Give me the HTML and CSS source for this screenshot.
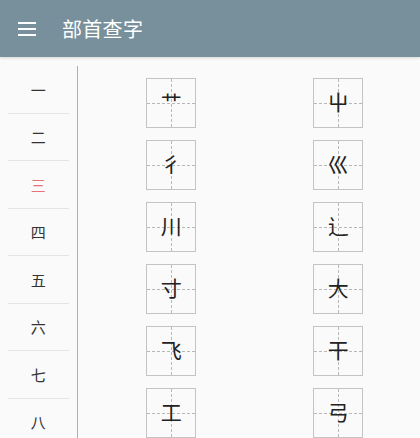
FILE: index.html
```html
<!DOCTYPE html>
<html lang="zh">
<head>
    <meta charset="UTF-8">
    <meta name="viewport" content="width=device-width, initial-scale=1.0">
    <title>部首查字</title>
    <link rel="stylesheet" href="styles.css">
</head>
<body>

<header class="toolbar">
    <svg class="menu-icon" width="18" height="14" viewBox="0 0 18 14">
        <rect x="0" y="0" width="18" height="2" fill="#fff"/>
        <rect x="0" y="6" width="18" height="2" fill="#fff"/>
        <rect x="0" y="12" width="18" height="2" fill="#fff"/>
    </svg>
    <h1 class="title">部首查字</h1>
</header>

<div class="main">
    <ul class="stroke-list">
        <li>一</li>
        <li>二</li>
        <li class="active">三</li>
        <li>四</li>
        <li>五</li>
        <li>六</li>
        <li>七</li>
        <li>八</li>
    </ul>

    <div class="radical-grid">
        <div class="cell"><span>艹</span></div>
        <div class="cell"><span>屮</span></div>
        <div class="cell"><span>彳</span></div>
        <div class="cell"><span>巛</span></div>
        <div class="cell"><span>川</span></div>
        <div class="cell"><span>辶</span></div>
        <div class="cell"><span>寸</span></div>
        <div class="cell"><span>大</span></div>
        <div class="cell"><span>飞</span></div>
        <div class="cell"><span>干</span></div>
        <div class="cell"><span>工</span></div>
        <div class="cell"><span>弓</span></div>
    </div>
</div>

</body>
</html>
```

FILE: styles.css
```css
body {
    font-family: Roboto, "Noto Sans CJK SC", sans-serif;
    background-color: #fafafa;
    margin: 0;
    height: 438px;
    overflow: hidden;
}

.toolbar {
    height: 57px;
    background-color: #78909c;
    display: flex;
    align-items: center;
    padding-left: 18px;
    box-shadow: 0 1px 3px rgba(0,0,0,0.15);
}

.menu-icon {
    display: block;
}

.title {
    margin: 0 0 0 26px;
    color: #fff;
    font-size: 20px;
    font-weight: normal;
    letter-spacing: 0.3px;
}

.main {
    display: flex;
    padding-top: 9px;
    height: 372px;
    overflow: hidden;
}

.stroke-list {
    list-style: none;
    margin: 0;
    padding: 0 8px 0 8px;
    width: 61px;
    border-right: 1px solid #b0b0b0;
    overflow: hidden;
}

.stroke-list li {
    height: 46.5px;
    display: flex;
    align-items: center;
    justify-content: center;
    font-size: 15px;
    color: #333;
    border-bottom: 1px solid #e4e4e4;
}

.stroke-list li.active {
    color: #e57373;
}

.radical-grid {
    display: grid;
    grid-template-columns: 167px 167px;
    row-gap: 12px;
    padding: 12px 0 0 10px;
    justify-items: center;
    align-content: start;
    overflow: hidden;
}

.cell {
    box-sizing: border-box;
    width: 50px;
    height: 50px;
    border: 1px solid #c4c4c4;
    position: relative;
    display: flex;
    align-items: center;
    justify-content: center;
    background-color: #fafafa;
}

.cell::before {
    content: "";
    position: absolute;
    left: 0;
    right: 0;
    top: 50%;
    border-top: 1px dashed #b8b8b8;
}

.cell::after {
    content: "";
    position: absolute;
    top: 0;
    bottom: 0;
    left: 50%;
    border-left: 1px dashed #b8b8b8;
}

.cell span {
    position: relative;
    z-index: 1;
    font-size: 21px;
    color: #222;
    line-height: 1;
}
```
